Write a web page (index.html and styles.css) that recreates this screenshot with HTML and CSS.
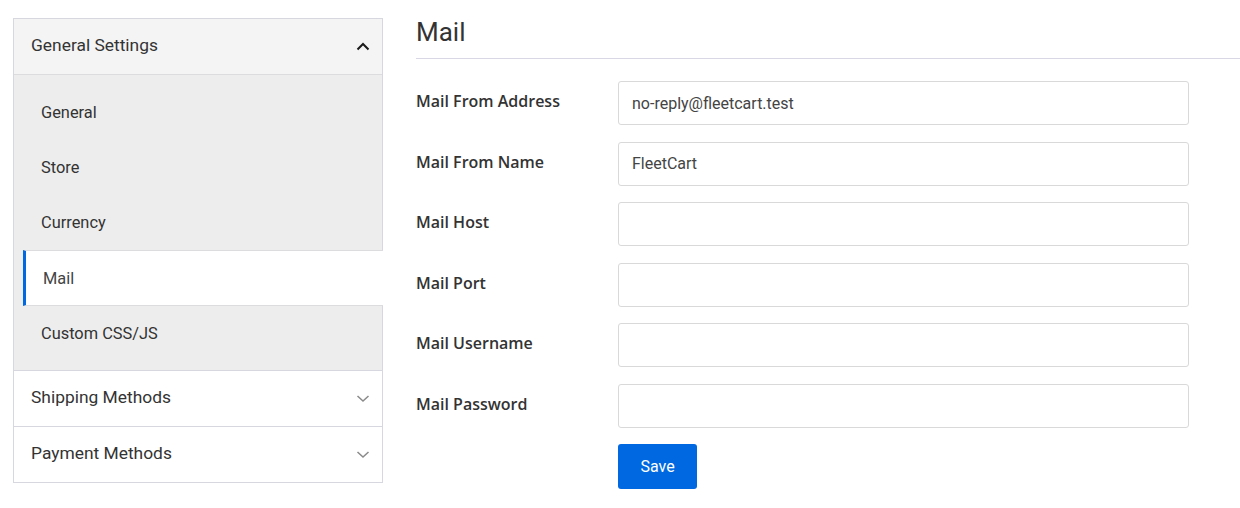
FILE: index.html
```html
<!DOCTYPE html>
<html>
<head>
<meta charset="utf-8">
<link rel="stylesheet" href="styles.css">
</head>
<body>
<div class="page">
  <aside class="sidebar">
    <div class="group open">
      <div class="group-head">
        <span>General Settings</span>
        <svg class="chev up" width="14" height="9" viewBox="0 0 14 9"><path d="M1.5 7.5 L7 2 L12.5 7.5" fill="none" stroke="#1a1a1a" stroke-width="2"/></svg>
      </div>
      <ul class="sub">
        <li>General</li>
        <li>Store</li>
        <li>Currency</li>
        <li class="active">Mail</li>
        <li>Custom CSS/JS</li>
      </ul>
    </div>
    <div class="group">
      <div class="group-head">
        <span>Shipping Methods</span>
        <svg class="chev" width="14" height="9" viewBox="0 0 14 9"><path d="M1.5 2 L7 7 L12.5 2" fill="none" stroke="#8a8a8a" stroke-width="1.5"/></svg>
      </div>
    </div>
    <div class="group">
      <div class="group-head">
        <span>Payment Methods</span>
        <svg class="chev" width="14" height="9" viewBox="0 0 14 9"><path d="M1.5 2 L7 7 L12.5 2" fill="none" stroke="#8a8a8a" stroke-width="1.5"/></svg>
      </div>
    </div>
  </aside>
  <main class="content">
    <h1 class="title">Mail</h1>
    <form class="form">
      <label class="lbl">Mail From Address</label>
      <input class="inp" type="text" value="no-reply@fleetcart.test">
      <label class="lbl">Mail From Name</label>
      <input class="inp" type="text" value="FleetCart">
      <label class="lbl">Mail Host</label>
      <input class="inp" type="text" value="">
      <label class="lbl">Mail Port</label>
      <input class="inp" type="text" value="">
      <label class="lbl">Mail Username</label>
      <input class="inp" type="text" value="">
      <label class="lbl">Mail Password</label>
      <input class="inp" type="password" value="">
      <div></div>
      <div><button type="button" class="btn">Save</button></div>
    </form>
  </main>
</div>
</body>
</html>
```

FILE: styles.css
```css
* { box-sizing: border-box; }
body {
  margin: 0;
  background: #fff;
  font-family: Roboto, "Liberation Sans", sans-serif;
  color: #333;
}
.page {
  display: flex;
  align-items: flex-start;
  padding: 18px 0 0 13px;
}
.sidebar {
  width: 370px;
  flex: none;
  border: 1px solid #d7d7df;
}
.group + .group { border-top: 1px solid #d7d7df; }
.group-head {
  height: 55px;
  display: flex;
  align-items: center;
  justify-content: space-between;
  padding: 0 12px 3px 17px;
  font-size: 17.4px;
  color: #333;
  background: #fff;
}
.group-head .chev { margin-top: 3px; }
.group.open .group-head {
  height: 56px;
  background: #f4f4f5;
  border-bottom: 1px solid #dcdcdf;
}
.chev { display: block; }
.sub {
  list-style: none;
  margin: 0;
  padding: 10px 0 9px 0;
  background: #ededed;
}
.sub li {
  height: 55px;
  display: flex;
  align-items: center;
  padding-left: 27px;
  font-size: 16.4px;
  color: #333;
}
.sub li.active {
  height: 56px;
  margin-left: 9px;
  margin-right: -1px;
  padding-left: 17px;
  background: #fff;
  border-left: 3px solid #0068e1;
  border-top: 1px solid #dcdcdf;
  border-bottom: 1px solid #dcdcdf;
  color: #444;
}
.content {
  flex: 1;
  margin-left: 33px;
  margin-top: -18px;
}
.title {
  margin: 0;
  font-size: 26px;
  font-weight: 400;
  line-height: 30px;
  padding: 17px 0 11px;
  border-bottom: 1px solid #d9d6e6;
  color: #333;
}
.form {
  display: grid;
  grid-template-columns: 202px 571px;
  row-gap: 16.5px;
  margin-top: 22px;
}
.lbl {
  font-family: "Open Sans", sans-serif;
  font-weight: 600;
  font-size: 16px;
  line-height: 22px;
  padding-top: 9px;
  color: #333;
}
.inp {
  height: 44px;
  width: 571px;
  border: 1px solid #d9d9d9;
  border-radius: 3px;
  padding: 0 13px;
  font-family: Roboto, sans-serif;
  font-size: 16px;
  color: #444;
  outline: none;
}
.btn {
  width: 79px;
  height: 45px;
  border: none;
  border-radius: 3px;
  background: #0068e1;
  color: #fff;
  font-family: Roboto, sans-serif;
  font-size: 16px;
  padding: 0;
}
```
